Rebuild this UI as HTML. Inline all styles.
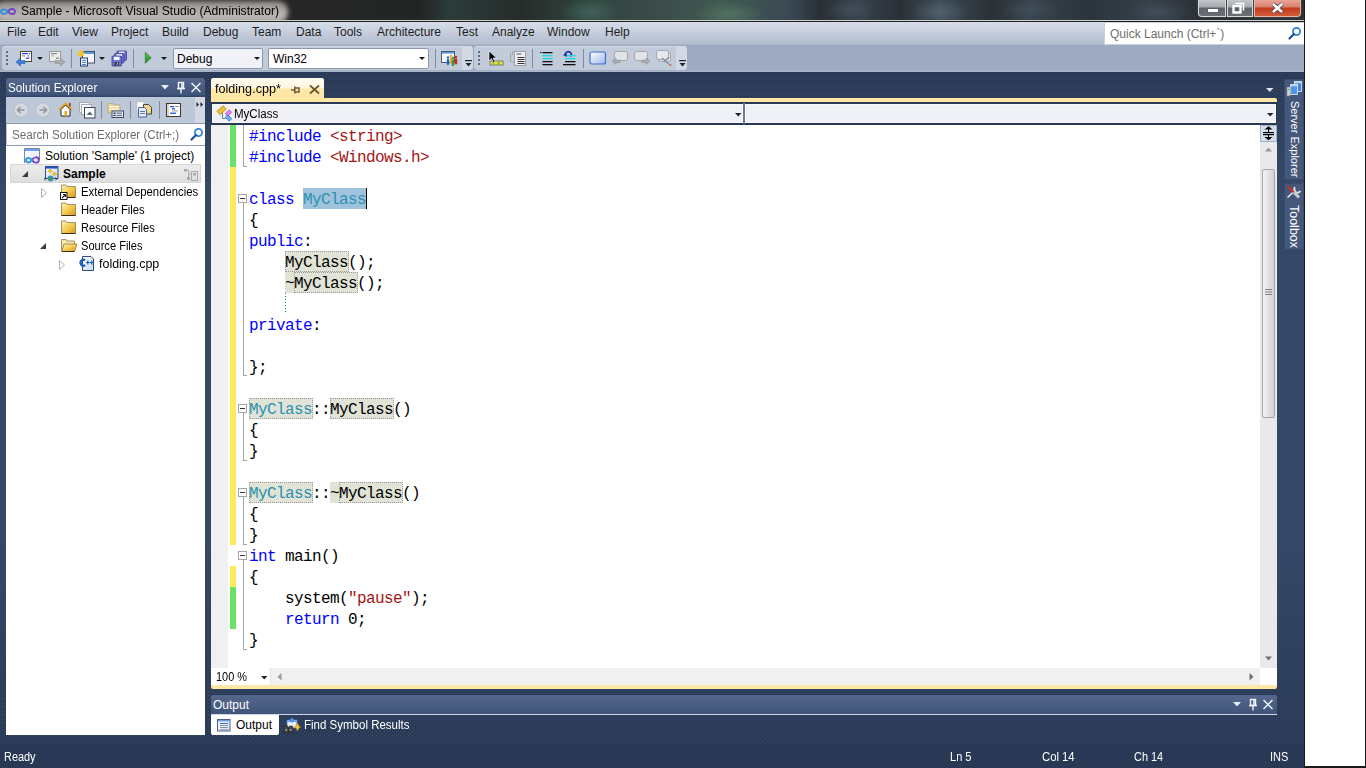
<!DOCTYPE html>
<html><head><meta charset="utf-8">
<style>
*{margin:0;padding:0;box-sizing:border-box}
html,body{width:1366px;height:768px;overflow:hidden;background:#fff}
body{position:relative;font-family:"Liberation Sans",sans-serif;font-size:12px;color:#000}
.a{position:absolute}
.t{position:absolute;white-space:pre;line-height:14px}
svg{position:absolute;overflow:visible}
#win{position:absolute;left:0;top:0;width:1304px;height:768px;overflow:hidden;background:#293955}
#rstrip{position:absolute;left:1304px;top:0;width:62px;height:768px;background:#1a1a1a}
#rwhite{position:absolute;left:1305px;top:0;width:60px;height:766px;background:#fff}
#title{position:absolute;left:0;top:0;width:1304px;height:21px;overflow:hidden;
 background:radial-gradient(ellipse 30px 14px at 590px 12px,rgba(80,120,110,.55),transparent),radial-gradient(ellipse 35px 12px at 730px 14px,rgba(95,130,105,.6),transparent),radial-gradient(ellipse 30px 12px at 940px 12px,rgba(95,115,130,.5),transparent),radial-gradient(ellipse 25px 12px at 850px 10px,rgba(80,95,110,.45),transparent),radial-gradient(ellipse 30px 12px at 1030px 10px,rgba(80,95,110,.4),transparent),radial-gradient(ellipse 30px 12px at 1160px 12px,rgba(80,95,110,.4),transparent),
 linear-gradient(90deg,#2c2c2c 0,#262626 290px,#232525 420px,#2c3c3a 450px,#262c2b 520px,#30453f 590px,#3a4a48 650px,#405a52 720px,#3a4854 790px,#2a3036 820px,#36424c 860px,#2a3036 900px,#3e4c58 940px,#2a3036 990px,#36424c 1030px,#2c343b 1090px,#37414b 1150px,#2b3136 1200px,#2b3136 1304px)}
#glow{position:absolute;left:-6px;top:1px;width:294px;height:22px;border-radius:10px;background:linear-gradient(#8f8a87,#b2adaa 45%,#bdb9b6 80%,#aaa5a2);filter:blur(2.5px)}
#menubar{position:absolute;left:0;top:22px;width:1304px;height:50px;background:linear-gradient(#d7dde9 0,#c3cbdb 12px,#b2bdd0 22px,#9eaac1 23px,#9ca9c0 48px,#a9b5c9 49px,#a9b5c9 50px)}
#status{position:absolute;left:0;top:744px;width:1304px;height:24px;background:#293955}
.st{color:#fff}
.code{font-family:"Liberation Mono",monospace;font-size:15px;line-height:21px;white-space:pre;position:absolute;left:0}
.kw{color:#0000ff}.str{color:#a31515}.ty{color:#2b91af}
.menu .t{top:25px;color:#1e1e1e;margin-left:-1px}
.tbband{position:absolute;top:45px;height:26px;border-radius:3px;background:linear-gradient(#d4dae5,#c9d1df);border-bottom:1px solid #a7b3c7}
.sep{position:absolute;width:1px;background:#8793a9;border-right:1px solid #e8ecf3}
.combo{position:absolute;background:#fff;border:1px solid #8e9ab0}
.ddarr{position:absolute;width:0;height:0;border-left:3px solid transparent;border-right:3px solid transparent;border-top:3px solid #1b1b1b}
.cl{position:absolute;left:0;height:21px;font-family:"Liberation Mono",monospace;font-size:16px;letter-spacing:-0.6px;line-height:21px;white-space:pre;padding-top:2px}
.box{position:absolute;left:238px;width:9px;height:9px;border:1px solid #a5a5a5;background:#fff}
.box::after{content:"";position:absolute;left:1px;top:3px;width:5px;height:1px;background:#333}
.ref{position:absolute;background:#e0e3d6;border:1px dotted #9a9a9a}
</style></head>
<body>
<div id="win">
  <!-- background with gradient + texture -->
  <svg style="left:0;top:72px" width="1304" height="672">
    <defs>
      <linearGradient id="bgg" x1="0" y1="0" x2="0" y2="1">
        <stop offset="0" stop-color="#293955"/>
        <stop offset="0.17" stop-color="#35496a"/>
        <stop offset="0.70" stop-color="#35496a"/>
        <stop offset="1" stop-color="#293955"/>
      </linearGradient>
      <pattern id="dots" x="0" y="0" width="4" height="4" patternUnits="userSpaceOnUse">
        <rect x="2" y="0" width="1" height="1" fill="#283853"/>
        <rect x="0" y="2" width="1" height="1" fill="#283853"/>
        <rect x="2" y="1" width="1" height="1" fill="#3b4f71"/>
        <rect x="0" y="3" width="1" height="1" fill="#3b4f71"/>
      </pattern>
    </defs>
    <rect x="0" y="0" width="1304" height="672" fill="url(#bgg)"/>
    <rect x="0" y="0" width="1304" height="672" fill="url(#dots)"/>
  </svg>

  <!-- TITLE BAR -->
  <div id="title"><div id="glow"></div></div>
  <div class="a" style="left:0;top:20px;width:1304px;height:1px;background:#d0d0d0"></div>
  <div class="a" style="left:0;top:21px;width:1304px;height:1px;background:#1e1e1e"></div>
  <svg style="left:0;top:6px" width="16" height="10" viewBox="0 0 16 10"><path d="M8 5.5 C9.6 2.6 15 1.8 15 5.5 C15 9.2 9.6 8.4 8 5.5" fill="none" stroke="#7b3fd0" stroke-width="1.9"/><path d="M8 5.5 C6.4 2.8 1 2.4 1 5.7 C1 9 6.4 8.3 8 5.5" fill="none" stroke="#2f8ee0" stroke-width="1.9"/></svg>
  <div class="t" style="left:21px;top:4px;color:#000;transform:scaleX(1.011);transform-origin:0 0">Sample - Microsoft Visual Studio (Administrator)</div>
  <!-- window buttons -->
  <div class="a" style="left:1197px;top:-2px;width:105px;height:20px;border:1px solid #3a3a3a;border-radius:0 0 5px 5px;background:#444"></div>
  <div class="a" style="left:1198px;top:0;width:28px;height:17px;border-radius:0 0 0 4px;background:linear-gradient(#c2c5c9 0,#a7abb0 7px,#5f646b 8px,#6a7077 17px);border:1px solid #d6d8da;border-top:0"></div>
  <div class="a" style="left:1227px;top:0;width:26px;height:17px;background:linear-gradient(#c2c5c9 0,#a7abb0 7px,#5f646b 8px,#6a7077 17px);border:1px solid #d6d8da;border-top:0"></div>
  <div class="a" style="left:1254px;top:0;width:47px;height:17px;border-radius:0 0 4px 0;background:linear-gradient(#e7a597 0,#d8806c 7px,#c23a1c 8px,#d0603e 17px);border:1px solid #e6b4a8;border-top:0"></div>
  <div class="a" style="left:1208px;top:9px;width:10px;height:3px;background:#fff;box-shadow:0 0 1px #333"></div>
  <svg style="left:1232px;top:2px" width="14" height="12" viewBox="0 0 14 12">
    <path d="M3.5 1.5h8v7" fill="none" stroke="#fff" stroke-width="1.6"/>
    <rect x="1.5" y="4" width="7" height="6.5" fill="none" stroke="#fff" stroke-width="2.4"/>
    <rect x="3" y="5.5" width="4" height="3.5" fill="#5f646b"/>
  </svg>
  <svg style="left:1271px;top:3px" width="13" height="10" viewBox="0 0 13 10">
    <path d="M2 1L11 9M11 1L2 9" stroke="#3a3f55" stroke-width="4"/>
    <path d="M2 1L11 9M11 1L2 9" stroke="#fff" stroke-width="2.6"/>
  </svg>

  <!-- MENU BAR -->
  <div id="menubar"></div>
  <div class="menu">
    <div class="t" style="left:8px">File</div>
    <div class="t" style="left:39px">Edit</div>
    <div class="t" style="left:73px">View</div>
    <div class="t" style="left:112px">Project</div>
    <div class="t" style="left:163px">Build</div>
    <div class="t" style="left:204px">Debug</div>
    <div class="t" style="left:253px">Team</div>
    <div class="t" style="left:297px">Data</div>
    <div class="t" style="left:335px">Tools</div>
    <div class="t" style="left:378px">Architecture</div>
    <div class="t" style="left:457px">Test</div>
    <div class="t" style="left:493px">Analyze</div>
    <div class="t" style="left:548px">Window</div>
    <div class="t" style="left:606px">Help</div>
  </div>
  <!-- quick launch -->
  <div class="a" style="left:1104px;top:22px;width:200px;height:23px;background:#fff;border:1px solid #c9d1de;border-right:0"></div>
  <div class="t" style="left:1110px;top:27px;color:#6d6d6d">Quick Launch (Ctrl+`)</div>
  <svg style="left:1288px;top:26px" width="14" height="14" viewBox="0 0 14 14">
    <circle cx="8.5" cy="5.5" r="3.6" fill="none" stroke="#2f86d6" stroke-width="1.8"/>
    <path d="M6 8L1.5 12.5" stroke="#1d4f99" stroke-width="2.2" stroke-linecap="round"/>
  </svg>

  <!--TOOLBAR-->
  
  <!-- toolbar band 1 -->
  <div class="a" style="left:2px;top:46px;width:471px;height:24px;border-radius:4px;background:#c2cbda;box-shadow:inset 0 1px 0 #d3dae6"></div>
  <div class="a" style="left:462px;top:46px;width:11px;height:24px;border-radius:0 4px 4px 0;background:#d2d9e5"></div>
  <!-- toolbar band 2 -->
  <div class="a" style="left:474px;top:46px;width:213px;height:24px;border-radius:4px;background:#c2cbda;box-shadow:inset 0 1px 0 #d3dae6"></div>
  <div class="a" style="left:676px;top:46px;width:11px;height:24px;border-radius:0 4px 4px 0;background:#d2d9e5"></div>
  <!-- grips -->
  <svg style="left:6px;top:51px" width="3" height="15"><rect x="0" y="0" width="2" height="2" fill="#5b6a87"/><rect x="0" y="4" width="2" height="2" fill="#5b6a87"/><rect x="0" y="8" width="2" height="2" fill="#5b6a87"/><rect x="0" y="12" width="2" height="2" fill="#5b6a87"/></svg>
  <svg style="left:478px;top:51px" width="3" height="15"><rect x="0" y="0" width="2" height="2" fill="#5b6a87"/><rect x="0" y="4" width="2" height="2" fill="#5b6a87"/><rect x="0" y="8" width="2" height="2" fill="#5b6a87"/><rect x="0" y="12" width="2" height="2" fill="#5b6a87"/></svg>
  <!-- separators -->
  <div class="a" style="left:71px;top:49px;width:1px;height:19px;background:#7d8aa2"></div>
  <div class="a" style="left:133px;top:49px;width:1px;height:19px;background:#7d8aa2"></div>
  <div class="a" style="left:435px;top:49px;width:1px;height:19px;background:#7d8aa2"></div>
  <div class="a" style="left:532px;top:49px;width:1px;height:19px;background:#7d8aa2"></div>
  <div class="a" style="left:583px;top:49px;width:1px;height:19px;background:#7d8aa2"></div>
  <!-- back nav icon -->
  <svg style="left:15px;top:50px" width="18" height="18" viewBox="0 0 18 18">
    <rect x="5.5" y="1.5" width="11" height="10" fill="#fff" stroke="#4a4536"/>
    <rect x="7" y="3" width="6" height="1.2" fill="#1f3cf0"/><rect x="14" y="3" width="1.2" height="1.2" fill="#1f3cf0"/>
    <rect x="7" y="5.4" width="3" height="1" fill="#888"/><rect x="12" y="5.4" width="2.5" height="1" fill="#888"/>
    <rect x="11" y="7.6" width="3.5" height="1.2" fill="#1f3cf0"/>
    <path d="M1 12L5.5 8V10.5H10V13.5H5.5V16Z" fill="#3f7fd6" stroke="#2a5cb0" stroke-width="0.6"/>
  </svg>
  <div class="ddarr" style="left:37px;top:57px;border-width:3px 3px 0 3px"></div>
  <!-- forward nav icon (disabled) -->
  <svg style="left:48px;top:50px" width="18" height="18" viewBox="0 0 18 18">
    <rect x="1.5" y="1.5" width="11" height="10" fill="#eee" stroke="#999"/>
    <rect x="3" y="3" width="6" height="1.2" fill="#888"/>
    <rect x="3" y="5.4" width="3" height="1" fill="#aaa"/><rect x="8" y="7.6" width="3" height="1.2" fill="#777"/>
    <path d="M17 12L12.5 8V10.5H7V13.5H12.5V16Z" fill="#a9adb2" stroke="#8e9296" stroke-width="0.6"/>
  </svg>
  <!-- new project -->
  <svg style="left:77px;top:50px" width="18" height="18" viewBox="0 0 18 18">
    <rect x="5.5" y="1.5" width="12" height="11.5" fill="#f2f6fc" stroke="#3c5170"/>
    <rect x="6" y="2" width="11" height="2" fill="#5b9be6"/>
    <path d="M4 0V7M0.5 3.5H7.5M1.5 1L6.5 6M6.5 1L1.5 6" stroke="#f5c517" stroke-width="1.3"/>
    <rect x="3.5" y="8" width="7" height="8" fill="#eaf1fb" stroke="#2d3f5e"/>
    <rect x="5" y="10" width="4" height="1" fill="#4c7fd8"/><rect x="5" y="12" width="4" height="1" fill="#4c7fd8"/><rect x="5" y="14" width="4" height="1" fill="#4c7fd8"/>
  </svg>
  <div class="ddarr" style="left:99px;top:57px;border-width:3px 3px 0 3px"></div>
  <!-- save all -->
  <svg style="left:111px;top:50px" width="17" height="17" viewBox="0 0 17 17"><rect x="6" y="1" width="9.5" height="9.5" rx="0.8" fill="#6a6fd0" stroke="#3a3e90" stroke-width="0.8"/><rect x="8" y="1.6" width="5.5" height="2" fill="#eef"/><rect x="3.5" y="3.5" width="9.5" height="9.5" rx="0.8" fill="#6a6fd0" stroke="#3a3e90" stroke-width="0.8"/><rect x="5.5" y="4.1" width="5.5" height="2" fill="#eef"/><rect x="1" y="6" width="9.5" height="10" rx="0.8" fill="#6d72d4" stroke="#3a3e90" stroke-width="0.8"/><rect x="2.8" y="6.7" width="5.8" height="3.3" fill="#f4f4ff"/><rect x="3.5" y="12" width="4.5" height="3.5" fill="#3a3a4a"/><rect x="5.8" y="12.6" width="1.2" height="2.2" fill="#bbb"/></svg>
  <!-- play -->
  <svg style="left:144px;top:51px" width="9" height="14" viewBox="0 0 9 14"><defs><linearGradient id="plg" x1="0" y1="0" x2="0" y2="1"><stop offset="0" stop-color="#5cc85c"/><stop offset="1" stop-color="#1e8a1e"/></linearGradient></defs><path d="M1.3 1.3L7.3 6.8L1.3 12.3Z" fill="url(#plg)" stroke="#1e6e1e" stroke-width="0.6"/></svg>
  <div class="ddarr" style="left:161px;top:57px;border-width:3px 3px 0 3px"></div>
  <!-- combos -->
  <div class="a" style="left:173px;top:48px;width:90px;height:21px;background:#f1f2f7;border:1px solid #8b97ab;border-radius:2px"></div>
  <div class="t" style="left:177px;top:52px">Debug</div>
  <div class="ddarr" style="left:254px;top:57px;border-width:3px 3px 0 3px"></div>
  <div class="a" style="left:268px;top:48px;width:161px;height:21px;background:#fff;border:1px solid #8b97ab;border-radius:2px"></div>
  <div class="t" style="left:273px;top:52px">Win32</div>
  <div class="ddarr" style="left:419px;top:57px;border-width:3px 3px 0 3px"></div>
  <!-- team icon -->
  <svg style="left:441px;top:50px" width="18" height="17" viewBox="0 0 18 17">
    <rect x="0.5" y="1.5" width="13" height="11" fill="#f4f7fb" stroke="#4a5a74"/>
    <rect x="1" y="2" width="12" height="1.6" fill="#5b9be6"/>
    <circle cx="7" cy="7.5" r="1.2" fill="#1e66d8"/><rect x="5.8" y="9" width="2.4" height="6" rx="1" fill="#1e66d8"/>
    <circle cx="10" cy="6" r="1.2" fill="#f0a31a"/><rect x="8.8" y="7.5" width="2.4" height="6" rx="1" fill="#f0a31a"/>
    <circle cx="12" cy="8" r="1.2" fill="#2aa02a"/><rect x="10.8" y="9.5" width="2.4" height="6.5" rx="1" fill="#2aa02a"/>
    <circle cx="15" cy="7" r="1.2" fill="#d9241f"/><rect x="13.8" y="8.5" width="2.4" height="6" rx="1" fill="#d9241f"/>
  </svg>
  <!-- overflow glyphs -->
  <svg style="left:465px;top:60px" width="8" height="8"><rect x="0" y="0" width="7" height="1.2" fill="#1b2433"/><path d="M0.5 3H6.5L3.5 6.5Z" fill="#1b2433"/></svg>
  <svg style="left:679px;top:60px" width="8" height="8"><rect x="0" y="0" width="7" height="1.2" fill="#1b2433"/><path d="M0.5 3H6.5L3.5 6.5Z" fill="#1b2433"/></svg>
  <!-- pointer icon -->
  <svg style="left:488px;top:50px" width="17" height="17" viewBox="0 0 17 17">
    <rect x="2" y="11" width="13" height="4" fill="#f2e81a" stroke="#54627a" stroke-width="0.8"/>
    <rect x="4" y="12.5" width="2.5" height="1" fill="#4477cc"/><rect x="9.5" y="12.5" width="2.5" height="1" fill="#4477cc"/>
    <path d="M1 1V11L3.5 8.6L5.5 13L7 12.3L5.2 8H8.5Z" fill="#000" stroke="#fff" stroke-width="0.6"/>
  </svg>
  <!-- disabled doc icon -->
  <svg style="left:509px;top:50px" width="18" height="17" viewBox="0 0 18 17">
    <path d="M1.5 3V12H5" fill="none" stroke="#9aa" stroke-width="1"/><path d="M3.5 1V5" stroke="#9aa"/>
    <rect x="5.5" y="1.5" width="11" height="14" fill="#eef0f3" stroke="#9a9ea4"/>
    <rect x="7.5" y="3.5" width="5" height="1" fill="#555"/>
    <rect x="8.5" y="7" width="7" height="1" fill="#333"/><rect x="8.5" y="9" width="7" height="1" fill="#333"/><rect x="8.5" y="11" width="7" height="1" fill="#333"/><rect x="8.5" y="13" width="7" height="1" fill="#333"/>
  </svg>
  <!-- indent icons -->
  <svg style="left:539px;top:51px" width="15" height="15" viewBox="0 0 15 15">
    <rect x="1" y="1" width="1.5" height="1" fill="#111"/><rect x="3.5" y="1" width="10" height="1.3" fill="#111"/>
    <rect x="3.5" y="4" width="10" height="1.3" fill="#19d9e6"/><rect x="3.5" y="7" width="10" height="1.3" fill="#19d9e6"/>
    <rect x="3.5" y="10" width="10" height="1.3" fill="#111"/><rect x="3.5" y="13" width="10" height="1.3" fill="#111"/>
  </svg>
  <svg style="left:562px;top:50px" width="15" height="16" viewBox="0 0 15 16">
    <path d="M3.5 5.5 A3 2.8 0 1 1 8.5 6.5" fill="none" stroke="#1e2ea0" stroke-width="1.6"/><path d="M1 5L4.5 3L4.8 7Z" fill="#1e2ea0"/>
    <rect x="5" y="5" width="8.5" height="1.3" fill="#19d9e6"/><rect x="3" y="8" width="10.5" height="1.3" fill="#19d9e6"/>
    <rect x="3" y="11" width="10.5" height="1.3" fill="#111"/><rect x="1" y="14" width="12.5" height="1.3" fill="#111"/>
  </svg>
  <!-- rectangle -->
  <svg style="left:589px;top:51px" width="18" height="14" viewBox="0 0 18 14">
    <defs><linearGradient id="rg" x1="0" y1="0" x2="1" y2="1"><stop offset="0" stop-color="#fff"/><stop offset="1" stop-color="#9fb7f0"/></linearGradient></defs>
    <rect x="1" y="1" width="15.5" height="12" rx="2" fill="url(#rg)" stroke="#3f6fd1" stroke-width="1.2"/>
  </svg>
  <!-- comment bubbles (disabled) -->
  <svg style="left:611px;top:50px" width="18" height="16" viewBox="0 0 18 16">
    <rect x="3.5" y="1.5" width="13" height="9" rx="2" fill="#e1e4e9" stroke="#a2a6ad"/>
    <path d="M1 11L5 8V10H9V12.5H5V14.5Z" fill="#a7abb1" stroke="#8e9296" stroke-width="0.5"/>
  </svg>
  <svg style="left:633px;top:50px" width="18" height="16" viewBox="0 0 18 16">
    <rect x="1.5" y="1.5" width="13" height="9" rx="2" fill="#e1e4e9" stroke="#a2a6ad"/>
    <path d="M17 11L13 8V10H9V12.5H13V14.5Z" fill="#a7abb1" stroke="#8e9296" stroke-width="0.5"/>
  </svg>
  <svg style="left:655px;top:49px" width="18" height="18" viewBox="0 0 18 18">
    <rect x="3.5" y="3.5" width="12" height="9" rx="2" fill="#dfe2e7" stroke="#a2a6ad"/>
    <rect x="1.5" y="1.5" width="12" height="9" rx="2" fill="#e6e8ec" stroke="#a2a6ad"/>
    <path d="M7 9L15 16M14 8L9 13" stroke="#8d9197" stroke-width="1.5"/><rect x="15" y="15.5" width="1.5" height="1.5" fill="#e35a3a"/>
  </svg>



  <!-- ============ SOLUTION EXPLORER ============ -->
  <div class="a" style="left:6px;top:78px;width:199px;height:19px;border-radius:3px 3px 0 0;background:linear-gradient(#55688c,#405379 17px,#34466a 18px)"></div>
  <div class="t" style="left:8px;top:81px;color:#fff;transform:scaleX(0.977);transform-origin:0 0">Solution Explorer</div>
  <svg style="left:161px;top:85px" width="9" height="5"><path d="M0 0H8L4 4.5Z" fill="#e8ecf3"/></svg>
  <svg style="left:176px;top:81px" width="10" height="13" viewBox="0 0 10 13"><path d="M2.5 1.5H7.5V7.5H2.5Z" fill="none" stroke="#f0f3f8" stroke-width="1.4"/><path d="M1 7.5H9M5 7.5V12.5" stroke="#f0f3f8" stroke-width="1.4"/><rect x="5.2" y="2" width="1.6" height="5" fill="#f0f3f8"/></svg>
  <svg style="left:190px;top:82px" width="12" height="11" viewBox="0 0 12 11"><path d="M1.5 1L10.5 10M10.5 1L1.5 10" stroke="#f0f3f8" stroke-width="1.5"/></svg>
  <!-- SE toolbar -->
  <div class="a" style="left:6px;top:97px;width:199px;height:27px;background:#bcc7d8;border-bottom:1px solid #8e9bb0"></div>
  <div class="a" style="left:195px;top:97px;width:10px;height:26px;background:#d2d9e5"></div>
  <svg style="left:196px;top:102px" width="8" height="5"><path d="M0.5 0L3 2.5L0.5 5Z M4.5 0L7 2.5L4.5 5Z" fill="#1b2433"/></svg>
  <svg style="left:13px;top:102px" width="16" height="16" viewBox="0 0 16 16"><circle cx="8" cy="8" r="7.2" fill="#d4d9e0" stroke="#b3b9c2" stroke-width="0.8"/><path d="M11.5 8H5M7.5 5L4.5 8L7.5 11" fill="none" stroke="#8e949c" stroke-width="1.6"/></svg>
  <svg style="left:35px;top:102px" width="16" height="16" viewBox="0 0 16 16"><circle cx="8" cy="8" r="7.2" fill="#d4d9e0" stroke="#b3b9c2" stroke-width="0.8"/><path d="M4.5 8H11M8.5 5L11.5 8L8.5 11" fill="none" stroke="#8e949c" stroke-width="1.6"/></svg>
  <svg style="left:58px;top:102px" width="15" height="15" viewBox="0 0 15 15"><rect x="11" y="1" width="1.5" height="4" fill="#8a2a1a"/><path d="M1 8L7.5 1.5L14 8" fill="none" stroke="#e3a21a" stroke-width="1.8"/><path d="M3 7.5V14H12V7.5L7.5 3Z" fill="#fff" stroke="#2a2a2a" stroke-width="1"/><rect x="6.5" y="9" width="2.5" height="5" fill="#e9a91b"/></svg>
  <svg style="left:79px;top:102px" width="17" height="17" viewBox="0 0 17 17"><rect x="0.5" y="0.5" width="10" height="10" fill="#f7f8fa" stroke="#a9adb3"/><rect x="2.5" y="2.5" width="10" height="10" fill="#f7f8fa" stroke="#a9adb3"/><rect x="5.5" y="5.5" width="10.5" height="10.5" fill="#fff" stroke="#3e4656"/><path d="M7.5 13H14L10.75 9.5Z" fill="#5a6b85"/></svg>
  <div class="a" style="left:101px;top:101px;width:1px;height:18px;background:#7d8aa2"></div>
  <svg style="left:107px;top:102px" width="17" height="16" viewBox="0 0 17 16"><path d="M1 1.5H6L7 3H13V11H1Z" fill="#e9d79a" stroke="#b4a77a" stroke-width="0.8"/><rect x="2" y="4" width="10" height="1" fill="#fff"/><rect x="2" y="6.5" width="10" height="1" fill="#fff"/><rect x="5" y="9" width="11.5" height="6.5" fill="#e6edf7" stroke="#3a4c6a"/><rect x="6.5" y="10.5" width="2" height="1.3" fill="#222"/><rect x="9.5" y="10.5" width="5.5" height="1.3" fill="#6a7a99"/><rect x="6.5" y="12.8" width="2" height="1.3" fill="#222"/><rect x="9.5" y="12.8" width="5.5" height="1.3" fill="#6a7a99"/></svg>
  <div class="a" style="left:130px;top:101px;width:1px;height:18px;background:#7d8aa2"></div>
  <svg style="left:136px;top:101px" width="17" height="17" viewBox="0 0 17 17"><rect x="1" y="1" width="7" height="9" fill="#fff" stroke="#bbb" stroke-dasharray="1 1"/><path d="M7.5 3.5H12.5L15.5 6.5V13H7.5Z" fill="#f4d68a" stroke="#333" stroke-width="0.9"/><path d="M2.5 6.5H8.5L10.5 8.5V16H2.5Z" fill="#e4ecf7" stroke="#3b5590" stroke-width="0.9"/><rect x="4" y="10" width="5" height="1" fill="#5577bb"/><rect x="4" y="12" width="5" height="1" fill="#5577bb"/></svg>
  <div class="a" style="left:159px;top:101px;width:1px;height:18px;background:#7d8aa2"></div>
  <svg style="left:166px;top:103px" width="15" height="14" viewBox="0 0 15 14"><rect x="0.5" y="0.5" width="14" height="13" fill="#fff" stroke="#3c3a30"/><rect x="1" y="1" width="2" height="12" fill="#d9d4c0"/><rect x="4" y="3" width="4" height="1.2" fill="#1c3cf0"/><rect x="9" y="3" width="4" height="1" fill="#999"/><rect x="6" y="5.2" width="3" height="1.2" fill="#1c3cf0"/><rect x="6" y="7.4" width="6" height="1" fill="#999"/><rect x="4" y="9.6" width="6" height="1.2" fill="#1c3cf0"/></svg>
  <!-- search box -->
  <div class="a" style="left:6px;top:124px;width:199px;height:22px;background:#fff;border-bottom:1px solid #8e9bb0;border-left:1px solid #b8c2d2"></div>
  <div class="t" style="left:12px;top:128px;color:#6d6d6d;transform:scaleX(0.966);transform-origin:0 0">Search Solution Explorer (Ctrl+;)</div>
  <svg style="left:190px;top:127px" width="14" height="14" viewBox="0 0 14 14"><circle cx="8.5" cy="5.5" r="3.6" fill="none" stroke="#2f86d6" stroke-width="1.8"/><path d="M6 8L1.5 12.5" stroke="#1d4f99" stroke-width="2.2" stroke-linecap="round"/></svg>
  <!-- tree -->
  <div class="a" style="left:6px;top:146px;width:199px;height:589px;background:#fff"></div>
  <div class="a" style="left:10px;top:164px;width:191px;height:19px;background:linear-gradient(#ececec,#dedede);border:1px solid #d6d6d6"></div>
  <svg style="left:24px;top:148px" width="17" height="17" viewBox="0 0 17 17"><defs><linearGradient id="slg" x1="0" y1="0" x2="1" y2="1"><stop offset="0" stop-color="#ffffff"/><stop offset="1" stop-color="#dfe6f4"/></linearGradient></defs><path d="M0.5 15V0.5H15.5V12" fill="url(#slg)" stroke="#7c8699" stroke-width="1"/><rect x="1" y="1" width="14" height="2" fill="#6aa4ea"/><path d="M8 12 C9.5 9 14.8 8 14.8 12 C14.8 16 9.5 15 8 12" fill="none" stroke="#7a45c8" stroke-width="2"/><path d="M8 12 C6.5 9.3 2 9 2 12.3 C2 15.6 6.5 14.8 8 12" fill="none" stroke="#2f9be8" stroke-width="2"/></svg>
  <div class="t" style="left:45px;top:149px">Solution 'Sample' (1 project)</div>
  <svg style="left:22px;top:171px" width="7" height="7"><path d="M6 0V6H0Z" fill="#3c3c3c"/></svg>
  <svg style="left:43px;top:165px" width="17" height="17" viewBox="0 0 17 17"><defs><linearGradient id="spg" x1="0" y1="0" x2="1" y2="1"><stop offset="0" stop-color="#ffffff"/><stop offset="1" stop-color="#c8d6ee"/></linearGradient></defs><rect x="2.5" y="1.5" width="12.5" height="12" fill="url(#spg)" stroke="#2d4a86" stroke-width="1"/><rect x="3" y="2" width="11.5" height="1.6" fill="#1d55c8"/><path d="M4.5 6H9.5M7 3.8V8.2M9 9H14M11.5 6.8V11.2" stroke="#e8b820" stroke-width="1.6"/><circle cx="7.5" cy="13.5" r="3" fill="#3a8fd8"/><path d="M5.5 12.5Q7 11 8.5 12.5T9.8 14.5L8 16Q6 15 5.5 12.5Z" fill="#3aa23a"/><path d="M2.8 12.5L1.3 14L2.8 15.5M12.2 12.5L13.7 14L12.2 15.5" fill="none" stroke="#222" stroke-width="0.9"/></svg>
  <div class="t" style="left:63px;top:167px;font-weight:bold">Sample</div>
  <svg style="left:183px;top:168px" width="16" height="14" viewBox="0 0 16 14"><rect x="1" y="1" width="3" height="2.5" fill="#a9a9a9"/><path d="M4 2.2H5.7V10.5M5.7 6H9" fill="none" stroke="#a9a9a9" stroke-width="1"/><rect x="4" y="9" width="3" height="3" fill="#a9a9a9"/><rect x="8.5" y="3.5" width="6" height="9" fill="none" stroke="#a9a9a9" stroke-width="1"/><rect x="10" y="5" width="3" height="2.5" fill="#a9a9a9"/></svg>
  <svg style="left:41px;top:188px" width="6" height="10"><path d="M0.5 0.5L5.5 5L0.5 9.5Z" fill="#fff" stroke="#a8a8a8" stroke-width="0.9"/></svg>
  <svg style="left:59px;top:183px" width="18" height="18" viewBox="0 0 18 18"><defs><linearGradient id="FG" x1="0" y1="0" x2="1" y2="1"><stop offset="0" stop-color="#fff3b0"/><stop offset="0.55" stop-color="#f4c84a"/><stop offset="1" stop-color="#d89418"/></linearGradient></defs><path d="M2.5 3.5V2H7L8 3.5H16.5V14.5H2.5Z" fill="url(#FG)" stroke="#8a7a50" stroke-width="0.8"/><rect x="2.5" y="14" width="14" height="1" fill="#3a3020"/><rect x="1.5" y="9.5" width="6.5" height="7" fill="#fff" stroke="#1a1a1a" stroke-width="1"/><path d="M3 15L6.2 11.8M4 11.5H6.5V14" fill="none" stroke="#1a1a1a" stroke-width="1.1"/></svg>
  <div class="t" style="left:81px;top:185px;transform:scaleX(0.945);transform-origin:0 0">External Dependencies</div>
  <svg style="left:59px;top:201px" width="18" height="17" viewBox="0 0 18 17"><path d="M2.5 3.5V2H7L8 3.5H16.5V14.5H2.5Z" fill="url(#FG)" stroke="#8a7a50" stroke-width="0.8"/><rect x="2.5" y="14" width="14" height="1" fill="#3a3020"/></svg>
  <div class="t" style="left:81px;top:203px;transform:scaleX(0.937);transform-origin:0 0">Header Files</div>
  <svg style="left:59px;top:219px" width="18" height="17" viewBox="0 0 18 17"><path d="M2.5 3.5V2H7L8 3.5H16.5V14.5H2.5Z" fill="url(#FG)" stroke="#8a7a50" stroke-width="0.8"/><rect x="2.5" y="14" width="14" height="1" fill="#3a3020"/></svg>
  <div class="t" style="left:81px;top:221px;transform:scaleX(0.921);transform-origin:0 0">Resource Files</div>
  <svg style="left:40px;top:243px" width="7" height="7"><path d="M6 0V6H0Z" fill="#3c3c3c"/></svg>
  <svg style="left:59px;top:237px" width="19" height="17" viewBox="0 0 19 17"><path d="M2.5 14V2.5H7L8 4H15.5V7" fill="#f8e8a0" stroke="#8a7a50" stroke-width="0.8"/><path d="M2.5 14.5L5 7H18L15.5 14.5Z" fill="url(#FG)" stroke="#8a7a50" stroke-width="0.8"/><rect x="3" y="14" width="12.5" height="1" fill="#3a3020"/></svg>
  <div class="t" style="left:81px;top:239px;transform:scaleX(0.922);transform-origin:0 0">Source Files</div>
  <svg style="left:59px;top:260px" width="6" height="10"><path d="M0.5 0.5L5.5 5L0.5 9.5Z" fill="#fff" stroke="#a8a8a8" stroke-width="0.9"/></svg>
  <svg style="left:78px;top:255px" width="17" height="17" viewBox="0 0 17 17"><defs><linearGradient id="cppg" x1="0" y1="0" x2="1" y2="1"><stop offset="0" stop-color="#fff"/><stop offset="1" stop-color="#c9d8f2"/></linearGradient></defs><path d="M4.5 1.5H13L15.5 4V15.5H4.5Z" fill="url(#cppg)" stroke="#2f4a78" stroke-width="1"/><path d="M7.2 5.2A3 3 0 1 0 7.2 10.2" fill="none" stroke="#1a5bc4" stroke-width="2.2"/><path d="M8 7.5H11.6M9.8 5.6V9.4M11.9 7.5H15.5M13.7 5.6V9.4" stroke="#1a5bc4" stroke-width="1.2"/></svg>
  <div class="t" style="left:99px;top:257px;transform:scaleX(1.038);transform-origin:0 0">folding.cpp</div>


  <!-- ============ EDITOR ============ -->
  <!-- tab -->
  <div class="a" style="left:211px;top:78px;width:113px;height:20px;border-radius:2px 2px 0 0;background:linear-gradient(#fffcf3 0,#fff6dc 10px,#ffe8a6 11px,#ffe8a6 20px)"></div>
  <div class="t" style="left:215px;top:82px;transform:scaleX(1.05);transform-origin:0 0">folding.cpp*</div>
  <svg style="left:291px;top:86px" width="9" height="8" viewBox="0 0 9 8"><path d="M0 4H3.5M3.8 0.5V7.5M3.8 2H8V6H3.8" fill="none" stroke="#6b5a34" stroke-width="1.5"/></svg>
  <svg style="left:309px;top:85px" width="11" height="9" viewBox="0 0 11 9"><path d="M1 0.5L10 8.5M10 0.5L1 8.5" stroke="#6b5a34" stroke-width="1.8"/></svg>
  <svg style="left:1266px;top:88px" width="8" height="5"><path d="M0 0H7.5L3.75 4Z" fill="#dfe4ec"/></svg>
  <!-- yellow strip + navbar -->
  <div class="a" style="left:211px;top:98px;width:1066px;height:4px;border-radius:0 2px 0 0;background:#ffe8a6"></div>
  <div class="a" style="left:211px;top:102px;width:1066px;height:23px;background:#293955"></div>
  <div class="a" style="left:212px;top:104px;width:531px;height:19px;background:#eff1f7;border:1px solid #f7f8fb"></div>
  <div class="a" style="left:745px;top:104px;width:531px;height:19px;background:#eff1f7;border:1px solid #f7f8fb"></div>
  <div class="a" style="left:743px;top:103px;width:2px;height:21px;background:#6f7e94"></div>
  <svg style="left:216px;top:105px" width="17" height="16" viewBox="0 0 17 16"><path d="M6.5 7V13.5H9.5" fill="none" stroke="#6b7a90" stroke-width="1"/><rect x="-4.2" y="-2.3" width="8.4" height="4.6" fill="#f0c030" stroke="#b08a10" stroke-width="0.7" transform="translate(5.6,5.2) rotate(-40)"/><rect x="-2.8" y="-1.8" width="5.6" height="3.6" fill="#e880f0" stroke="#a040b0" stroke-width="0.6" transform="translate(12.5,8) rotate(-45)"/><rect x="-2.8" y="-1.8" width="5.6" height="3.6" fill="#6aaef0" stroke="#1d55c0" stroke-width="0.6" transform="translate(12.5,13) rotate(45)"/></svg>
  <div class="t" style="left:234px;top:107px;transform:scaleX(0.96);transform-origin:0 0">MyClass</div>
  <svg style="left:735px;top:113px" width="7" height="4"><path d="M0 0H6.5L3.25 3.5Z" fill="#1b2433"/></svg>
  <svg style="left:1267px;top:113px" width="7" height="4"><path d="M0 0H6.5L3.25 3.5Z" fill="#1b2433"/></svg>
  <!-- editor body -->
  <div class="a" style="left:211px;top:125px;width:1066px;height:543px;background:#fff"></div>
  <div class="a" style="left:211px;top:125px;width:17px;height:543px;background:#f0f0f0"></div>
  <!-- change bars -->
  <div class="a" style="left:230px;top:125px;width:6px;height:42px;background:#6ae26a"></div>
  <div class="a" style="left:230px;top:167px;width:6px;height:378px;background:#ffea5e"></div>
  <div class="a" style="left:230px;top:566px;width:6px;height:21px;background:#ffea5e"></div>
  <div class="a" style="left:230px;top:587px;width:6px;height:42px;background:#6ae26a"></div>
  <!-- outlining -->
  <div class="a" style="left:243px;top:125px;width:1px;height:41px;background:#a5a5a5"></div>
  <div class="a" style="left:243px;top:166px;width:4px;height:1px;background:#a5a5a5"></div>
  <div class="box" style="top:194px"></div>
  <div class="a" style="left:243px;top:203px;width:1px;height:172px;background:#a5a5a5"></div>
  <div class="a" style="left:243px;top:375px;width:4px;height:1px;background:#a5a5a5"></div>
  <div class="box" style="top:404px"></div>
  <div class="a" style="left:243px;top:413px;width:1px;height:47px;background:#a5a5a5"></div>
  <div class="a" style="left:243px;top:460px;width:4px;height:1px;background:#a5a5a5"></div>
  <div class="box" style="top:488px"></div>
  <div class="a" style="left:243px;top:497px;width:1px;height:47px;background:#a5a5a5"></div>
  <div class="a" style="left:243px;top:544px;width:4px;height:1px;background:#a5a5a5"></div>
  <div class="box" style="top:551px"></div>
  <div class="a" style="left:243px;top:560px;width:1px;height:89px;background:#a5a5a5"></div>
  <div class="a" style="left:243px;top:649px;width:4px;height:1px;background:#a5a5a5"></div>
  <!-- highlights -->
  <div class="a" style="left:303px;top:188px;width:63px;height:21px;background:#9fc3dc"></div>
  <div class="a" style="left:366px;top:188px;width:1px;height:21px;background:#000"></div>
  <div class="ref" style="left:285px;top:251px;width:64px;height:21px"></div>
  <div class="a" style="left:285px;top:272px;width:9px;height:21px;background:#e0e3d6"></div>
  <div class="ref" style="left:294px;top:272px;width:64px;height:21px"></div>
  <svg style="left:285px;top:293px" width="1" height="20"><rect x="0" y="0" width="1" height="1" fill="#1f7f8f"/><rect x="0" y="3" width="1" height="1" fill="#1f7f8f"/><rect x="0" y="6" width="1" height="1" fill="#1f7f8f"/><rect x="0" y="9" width="1" height="1" fill="#1f7f8f"/><rect x="0" y="12" width="1" height="1" fill="#1f7f8f"/><rect x="0" y="15" width="1" height="1" fill="#1f7f8f"/><rect x="0" y="18" width="1" height="1" fill="#1f7f8f"/></svg>
  <div class="ref" style="left:249px;top:398px;width:64px;height:21px"></div>
  <div class="ref" style="left:330px;top:398px;width:64px;height:21px"></div>
  <div class="ref" style="left:249px;top:482px;width:64px;height:21px"></div>
  <div class="a" style="left:330px;top:482px;width:9px;height:21px;background:#e0e3d6"></div>
  <div class="ref" style="left:339px;top:482px;width:64px;height:21px"></div>
  <!-- code -->
  <div class="a" style="left:249px;top:125px;width:1000px;height:543px">
<div class="cl" style="top:0px"><span class="kw">#include</span> <span class="str">&lt;string&gt;</span></div><div class="cl" style="top:21px"><span class="kw">#include</span> <span class="str">&lt;Windows.h&gt;</span></div><div class="cl" style="top:42px"></div><div class="cl" style="top:63px"><span class="kw">class</span> <span class="ty">MyClass</span></div><div class="cl" style="top:84px">{</div><div class="cl" style="top:105px"><span class="kw">public</span>:</div><div class="cl" style="top:126px">    MyClass();</div><div class="cl" style="top:147px">    ~MyClass();</div><div class="cl" style="top:168px"></div><div class="cl" style="top:189px"><span class="kw">private</span>:</div><div class="cl" style="top:210px"></div><div class="cl" style="top:231px">};</div><div class="cl" style="top:252px"></div><div class="cl" style="top:273px"><span class="ty">MyClass</span>::MyClass()</div><div class="cl" style="top:294px">{</div><div class="cl" style="top:315px">}</div><div class="cl" style="top:336px"></div><div class="cl" style="top:357px"><span class="ty">MyClass</span>::~MyClass()</div><div class="cl" style="top:378px">{</div><div class="cl" style="top:399px">}</div><div class="cl" style="top:420px"><span class="kw">int</span> main()</div><div class="cl" style="top:441px">{</div><div class="cl" style="top:462px">    system(<span class="str">"pause"</span>);</div><div class="cl" style="top:483px">    <span class="kw">return</span> 0;</div><div class="cl" style="top:504px">}</div>
  </div>
  <div class="t ty" style="left:303px;top:191px;display:none"></div>
  <!-- vertical scrollbar -->
  <div class="a" style="left:1260px;top:125px;width:17px;height:543px;background:#e9e9e9"></div>
  <div class="a" style="left:1260px;top:125px;width:17px;height:17px;background:#d5dde9;border:1px solid #a3b1c6"></div>
  <svg style="left:1262px;top:126px" width="13" height="15" viewBox="0 0 13 15"><path d="M2.5 3.5L6.5 0.3L10.5 3.5Z" fill="#000"/><rect x="6" y="3" width="1" height="3" fill="#000"/><rect x="1" y="6" width="11" height="1.2" fill="#000"/><rect x="1" y="8" width="11" height="1.2" fill="#000"/><rect x="6" y="9" width="1" height="2.5" fill="#000"/><path d="M2.5 11L6.5 14.3L10.5 11Z" fill="#000"/></svg>
  <svg style="left:1265px;top:147px" width="8" height="5"><path d="M0 4.5H7L3.5 0.5Z" fill="#9a9a9a"/></svg>
  <div class="a" style="left:1262px;top:169px;width:13px;height:249px;border:1px solid #a8a8a8;border-radius:2px;background:linear-gradient(90deg,#f4f4f4,#e4e4e4 45%,#d0d0d0)"></div>
  <svg style="left:1264px;top:289px" width="9" height="7"><path d="M1 0.5H8M1 3H8M1 5.5H8" stroke="#777" stroke-width="0.9"/></svg>
  <svg style="left:1265px;top:656px" width="8" height="5"><path d="M0 0.5H7L3.5 4.5Z" fill="#707070"/></svg>
  <!-- horizontal scroll bar row -->
  <div class="a" style="left:211px;top:668px;width:1049px;height:17px;background:#f0f0f0"></div>
  <div class="a" style="left:1260px;top:668px;width:17px;height:17px;background:#fff"></div>
  <div class="a" style="left:211px;top:668px;width:60px;height:17px;background:#fff;border-right:1px solid #e2e2e2"></div>
  <div class="t" style="left:216px;top:670px;transform:scaleX(0.91);transform-origin:0 0">100 %</div>
  <svg style="left:261px;top:676px" width="7" height="4"><path d="M0 0H6.5L3.25 3.5Z" fill="#1b2433"/></svg>
  <svg style="left:277px;top:673px" width="5" height="8"><path d="M4.5 0L0.5 3.75L4.5 7.5Z" fill="#9a9a9a"/></svg>
  <svg style="left:1249px;top:673px" width="5" height="8"><path d="M0.5 0L4.5 3.75L0.5 7.5Z" fill="#707070"/></svg>
  <div class="a" style="left:211px;top:685px;width:1066px;height:4px;border-radius:0 0 2px 2px;background:#ffe8a6"></div>

  <!-- ============ OUTPUT ============ -->
  <div class="a" style="left:211px;top:695px;width:1066px;height:19px;border-radius:2px 2px 0 0;background:linear-gradient(#55688c,#405379)"></div>
  <div class="a" style="left:211px;top:714px;width:1066px;height:1px;background:#cfd6e2"></div>
  <div class="t" style="left:213px;top:698px;color:#fff">Output</div>
  <svg style="left:1233px;top:702px" width="9" height="5"><path d="M0 0H8L4 4.5Z" fill="#e8ecf3"/></svg>
  <svg style="left:1248px;top:698px" width="10" height="13" viewBox="0 0 10 13"><path d="M2.5 1.5H7.5V7.5H2.5Z" fill="none" stroke="#f0f3f8" stroke-width="1.4"/><path d="M1 7.5H9M5 7.5V12.5" stroke="#f0f3f8" stroke-width="1.4"/><rect x="5.2" y="2" width="1.6" height="5" fill="#f0f3f8"/></svg>
  <svg style="left:1262px;top:699px" width="12" height="11" viewBox="0 0 12 11"><path d="M1.5 1L10.5 10M10.5 1L1.5 10" stroke="#f0f3f8" stroke-width="1.5"/></svg>
  <div class="a" style="left:211px;top:715px;width:68px;height:20px;border-radius:0 0 2px 2px;background:#fff"></div>
  <svg style="left:217px;top:719px" width="14" height="13" viewBox="0 0 14 13"><defs><linearGradient id="oig" x1="0" y1="0" x2="1" y2="1"><stop offset="0" stop-color="#fff"/><stop offset="1" stop-color="#d4def0"/></linearGradient></defs><rect x="0.5" y="0.5" width="12.5" height="11.5" fill="url(#oig)" stroke="#4a5f88" stroke-width="1"/><rect x="1" y="1" width="11.5" height="1.5" fill="#6aa0e8"/><rect x="3" y="4" width="8" height="1" fill="#3a6ad0"/><rect x="3" y="6" width="8" height="1" fill="#8a94a8"/><rect x="3" y="8" width="8" height="1" fill="#8a94a8"/><rect x="3" y="10" width="8" height="1" fill="#a0a8b8"/></svg>
  <div class="t" style="left:236px;top:718px">Output</div>
  <svg style="left:283px;top:717px" width="18" height="17" viewBox="0 0 18 17"><rect x="4" y="3" width="10" height="8" fill="#e8eef8" stroke="#4a6ab0" stroke-width="0.8"/><rect x="4.4" y="3.4" width="9.2" height="1.6" fill="#6aa0e8"/><path d="M9 0.5L11 3L9 5.5L7 3Z" fill="#5aa0f0" stroke="#2a5cb0" stroke-width="0.5"/><path d="M14.5 6L16 9L17.5 10L16 11L14.5 14L13 11L11.5 10L13 9Z" fill="#f2c23a" stroke="#b08a10" stroke-width="0.5"/><path d="M2 9H5L6 15.5H1Z M6.5 9H9.5L10.5 15.5H5.5Z" fill="#4a4a4a" stroke="#222" stroke-width="0.6"/><rect x="4.5" y="10.5" width="2.5" height="2" fill="#333"/><rect x="2" y="12" width="2" height="1.5" fill="#999"/><rect x="6.5" y="12" width="2" height="1.5" fill="#999"/></svg>
  <div class="t" style="left:304px;top:718px;color:#fff;transform:scaleX(0.959);transform-origin:0 0">Find Symbol Results</div>

  <!-- ============ RIGHT TABS ============ -->
  <div class="a" style="left:1284px;top:79px;width:20px;height:101px;background:#45587b;border:1px solid #3a4c6c"></div>
  <svg style="left:1286px;top:80px" width="17" height="17" viewBox="0 0 17 17"><rect x="8.5" y="1.5" width="7" height="10" fill="#3f86e0" stroke="#e8eef8" stroke-width="0.8"/><rect x="8.8" y="1.8" width="6.4" height="1.5" fill="#bcd4f4"/><rect x="4.5" y="4.5" width="7" height="10" fill="#4f96ea" stroke="#e8eef8" stroke-width="0.8"/><rect x="4.8" y="4.8" width="6.4" height="1.5" fill="#bcd4f4"/><rect x="1" y="7" width="3" height="9" fill="#d8d8d8" stroke="#888" stroke-width="0.6"/><rect x="1.8" y="9" width="1.5" height="1" fill="#3a3"/></svg>
  <div class="t" style="left:1288px;top:101px;font-size:11px;color:#fff;transform-origin:0 0;transform:translate(14px,0) rotate(90deg)">Server Explorer</div>
  <div class="a" style="left:1284px;top:183px;width:20px;height:67px;background:#45587b;border:1px solid #3a4c6c"></div>
  <svg style="left:1286px;top:185px" width="17" height="16" viewBox="0 0 17 16"><path d="M1.5 12.5L9.5 5" stroke="#eef0f4" stroke-width="1.5"/><path d="M9.2 2.2A3.2 3.2 0 1 0 14.3 5.8" fill="none" stroke="#d8dbe0" stroke-width="2"/><path d="M1.5 1L8 7.5" stroke="#d42a2a" stroke-width="2"/><path d="M8 7.5L13 12.5" stroke="#c8ccd2" stroke-width="3"/></svg>
  <div class="t" style="left:1287px;top:205px;font-size:12px;color:#fff;transform-origin:0 0;transform:translate(14px,0) rotate(90deg) scaleX(1.04)">Toolbox</div>

  <!-- STATUS -->
  <div id="status"></div>
  <div class="t st" style="left:4px;top:750px;transform:scaleX(0.91);transform-origin:0 0">Ready</div>
  <div class="t st" style="left:950px;top:750px;transform:scaleX(0.92);transform-origin:0 0">Ln 5</div>
  <div class="t st" style="left:1042px;top:750px;transform:scaleX(0.94);transform-origin:0 0">Col 14</div>
  <div class="t st" style="left:1134px;top:750px;transform:scaleX(0.91);transform-origin:0 0">Ch 14</div>
  <div class="t st" style="left:1270px;top:750px;transform:scaleX(0.92);transform-origin:0 0">INS</div>
</div>
<div id="rstrip"></div>
<div id="rwhite"></div>
</body></html>
